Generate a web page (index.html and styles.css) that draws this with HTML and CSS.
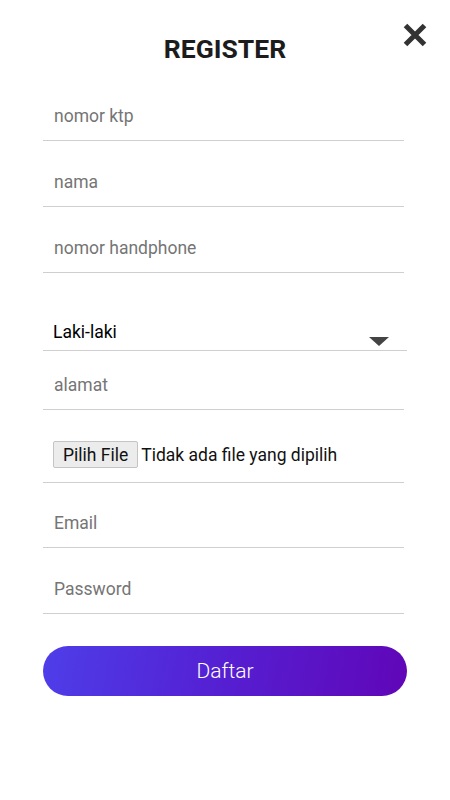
FILE: index.html
```html
<!DOCTYPE html>
<html lang="id">
<head>
<meta charset="utf-8">
<title>Register</title>
<link rel="stylesheet" href="styles.css">
</head>
<body>
<div class="page">
  <header class="header">
    <h1 class="title">REGISTER</h1>
    <button class="close" aria-label="close">
      <svg width="24" height="24" viewBox="0 0 24 24"><path d="M2.5 2.5L21.5 21.5M21.5 2.5L2.5 21.5" stroke="#333" stroke-width="5" stroke-linecap="butt" fill="none"/></svg>
    </button>
  </header>
  <form class="form">
    <input class="field" type="text" placeholder="nomor ktp">
    <input class="field" type="text" placeholder="nama">
    <input class="field" type="text" placeholder="nomor handphone">
    <div class="select-wrap">
      <select class="select"><option>Laki-laki</option><option>Perempuan</option></select>
      <svg class="arrow" width="20" height="9" viewBox="0 0 20 9"><path d="M0 0H20L10 9Z" fill="#444"/></svg>
    </div>
    <input class="field field-alamat" type="text" placeholder="alamat">
    <div class="file-row">
      <span class="file-btn">Pilih File</span>
      <span class="file-text">Tidak ada file yang dipilih</span>
    </div>
    <input class="field" type="email" placeholder="Email">
    <input class="field" type="password" placeholder="Password">
    <button class="submit" type="button">Daftar</button>
  </form>
</div>
</body>
</html>
```
FILE: styles.css
```css
* { box-sizing: border-box; }
html, body { margin: 0; padding: 0; background: #fff; }
body { font-family: Roboto, "Noto Sans", sans-serif; }
.page { width: 450px; padding: 0 43px; }
.header { position: relative; height: 91px; display: flex; align-items: flex-start; justify-content: center; }
.title { margin: 33px 0 0; font-size: 26.5px; font-weight: 700; color: #1c1c1c; line-height: 32px; letter-spacing: 0; }
.close { position: absolute; right: -20px; top: 23px; width: 24px; height: 24px; padding: 0; border: 0; background: none; }
.close svg { display: block; }
.form { display: flex; flex-direction: column; }
.field { display: block; width: 361px; height: 50px; margin: 0 0 16px; padding: 0 11px; border: 0; border-bottom: 1px solid #cfcfcf; outline: none; font-family: Roboto, sans-serif; font-size: 17.5px; color: #222; background: transparent; }
.field::placeholder { color: #757575; }
.select-wrap { position: relative; width: 364px; margin-top: 25px; }
.select { appearance: none; -webkit-appearance: none; display: block; width: 364px; height: 37px; padding: 0 10px 0; border: 0; border-bottom: 1px solid #cfcfcf; border-radius: 0; background: transparent; font-family: Roboto, sans-serif; font-size: 17.5px; color: #000; outline: none; }
.arrow { position: absolute; right: 18px; top: 23px; }
.field-alamat { margin-top: 9px; }
.file-row { width: 361px; height: 57px; margin-bottom: 15px; display: flex; align-items: center; gap: 3px; padding: 1px 0 0 10px; border-bottom: 1px solid #cfcfcf; font-size: 17.5px; color: #111; }
.file-btn { display: inline-flex; align-items: center; height: 27px; padding: 0 9px; background: #ececec; border: 1px solid #c4c4c4; border-radius: 2px; color: #111; }
.file-text { color: #111; }
.submit { width: 364px; height: 50px; margin-top: 16px; border: 0; border-radius: 25px; background: linear-gradient(100deg, #4e3ee9 0%, #5422d4 45%, #6006b8 100%); color: #fff; font-family: Roboto, sans-serif; font-size: 21px; font-weight: 300; }
```
